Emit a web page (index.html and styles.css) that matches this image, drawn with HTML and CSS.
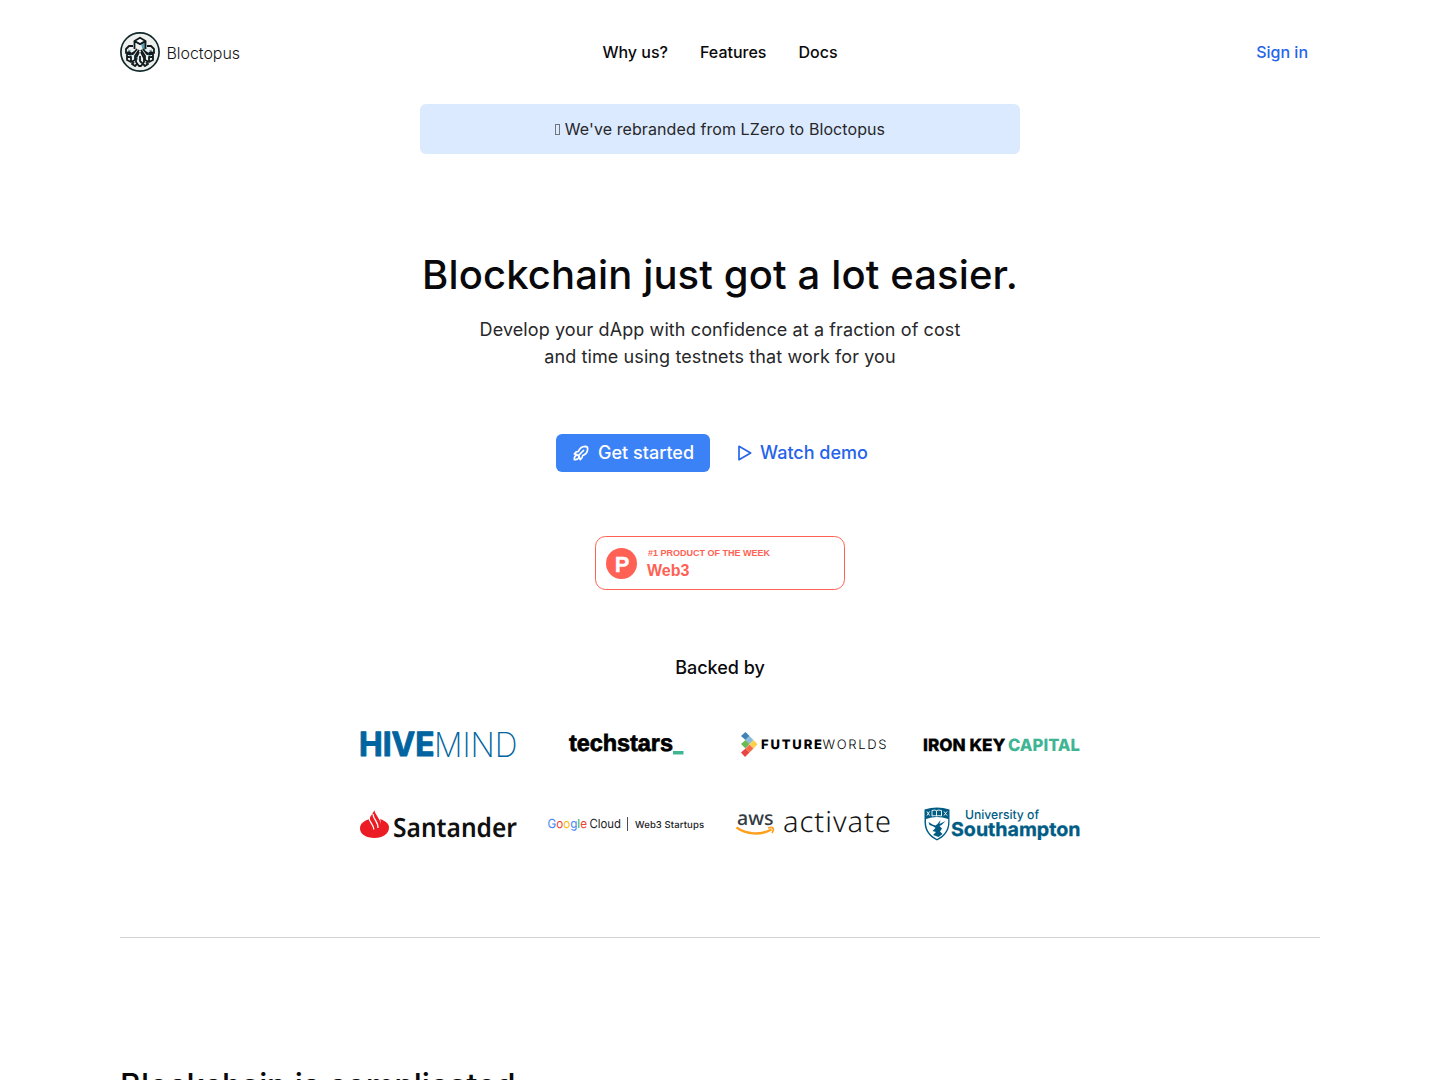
FILE: index.html
```html
<!DOCTYPE html>
<html lang="en">
<head>
<meta charset="utf-8">
<title>Bloctopus</title>
<link rel="stylesheet" href="styles.css">
</head>
<body>
<div class="page">
  <header class="header">
    <a class="brand">
      <svg width="120" height="40" viewBox="0 0 120 40">
        <circle cx="20" cy="20" r="19.1" fill="#eef0ee" stroke="#10282a" stroke-width="1.7"/>
        <path d="M21 12l5-3v8l-3 2z" fill="#5d9fb0"/>
        <g fill="none" stroke="#101a1c" stroke-width="1.8" stroke-linejoin="round">
          <path d="M14.500 9v8M25.500 9v8M14.500 9l5.500 3 5.500-3"/>
          <path d="M14.500 9L20 5.700 25.500 9 20 12z" fill="#fff"/>
          <path d="M13 14H9l-3 3v4l3-1 3 2 2-2M27 14h4l3 3v4l-3-1-3 2-2-2"/>
          <path d="M17 17l-4 5H7v6l4 2 4-2v-4l4-6M23 17l4 5h6v6l-4 2-4-2v-4l-4-6M7 25h4v4M33 25h-4v4"/>
          <path d="M19 20l-3 6v4l3 4h2l3-4v-4l-3-6M20 24v5l2 2M14 30l-2 2 3 2 2-2M26 30l2 2-3 2-2-2"/>
        </g>
        <path d="M8 18l3 1M29 19l3-1M9 24l3-1M28 23l3 1M17 25l1 3" stroke="#5d9fb0"/>
        <text class="inter" x="46.500" y="26.500" font-size="16" font-weight="300" fill="#151515" textLength="73.500">Bloctopus</text>
      </svg>
    </a>
    <nav class="nav"><a>Why us?</a><a>Features</a><a>Docs</a></nav>
    <a class="signin">Sign in</a>
  </header>
  <div class="notice"><span class="glyph-box"></span>We've rebranded from LZero to Bloctopus</div>
  <main class="hero">
    <h1>Blockchain just got a lot easier.</h1>
    <p class="lead">Develop your dApp with confidence at a fraction of cost<br>and time using testnets that work for you</p>
    <div class="actions">
      <a class="button primary">
        <svg width="20" height="20" viewBox="0 0 24 24" fill="none" stroke="currentColor" stroke-width="2" stroke-linecap="round" stroke-linejoin="round"><path d="M4 13a8 8 0 0 1 7 7a6 6 0 0 0 3-5a9 9 0 0 0 6-8a3 3 0 0 0-3-3a9 9 0 0 0-8 6a6 6 0 0 0-5 3"/><path d="M7 14a6 6 0 0 0-3 6a6 6 0 0 0 6-3"/><path d="M9.500 14.500l5.500-5.500"/></svg>
        Get started
      </a>
      <a class="button ghost">
        <svg width="20" height="20" viewBox="0 0 24 24" fill="none" stroke="currentColor" stroke-width="2" stroke-linecap="round" stroke-linejoin="round"><path d="M6 4v16l14-8z"/></svg>
        Watch demo
      </a>
    </div>
    <svg class="award" width="250" height="54" viewBox="0 0 250 54">
      <rect x=".5" y=".5" width="249" height="53" rx="10" fill="#fff" stroke="#ff6154"/>
      <circle cx="26.500" cy="27.500" r="15.500" fill="#ff6154"/>
      <text class="arial" x="19.800" y="35.500" font-size="22" font-weight="700" fill="#fff" stroke="#fff" stroke-width=".3">P</text>
      <text class="arial" x="53" y="20" font-size="9" font-weight="700" fill="#ff6154">#1 PRODUCT OF THE WEEK</text>
      <text class="arial" x="52" y="40" font-size="16" font-weight="700" fill="#ff6154">Web3</text>
    </svg>
    <h2 class="backed">Backed by</h2>
    <div class="logos">
      <svg viewBox="0 0 156 48">
        <g fill="#0064a0">
          <text class="inter" x="-1" y="36" font-size="33.500" font-weight="700" stroke="#0064a0" stroke-width="1" stroke-linejoin="round" textLength="75.500" lengthAdjust="spacingAndGlyphs">HIVE</text>
          <text class="inter" x="74" y="36.500" font-size="34.500" font-weight="200" textLength="83.500" lengthAdjust="spacingAndGlyphs">MIND</text>
        </g>
      </svg>
      <svg viewBox="0 0 156 48">
        <text class="arial" x="21" y="31" font-size="23.500" font-weight="700" stroke="#000" stroke-width=".7" textLength="104">techstars</text>
        <path d="M125 31h10.500v3.500H125z" fill="#40b593"/>
      </svg>
      <svg viewBox="0 0 156 48">
        <path d="M9.500 12l4 4-4 4-4.500-4z" fill="#3f82b5"/><path d="M13.500 16l4 4-4 4-4-4z" fill="#8dbbdb"/>
        <path d="M9.500 20l4 4-4 4.500-4.500-4.500z" fill="#6cba57"/><path d="M17.500 20l4 4.300-4 4.200-4-4.500z" fill="#fbd04b"/>
        <path d="M13.500 24.500l4 4-4 4-4-4z" fill="#f56a47"/><path d="M9.500 28.500l4 4-4.500 4.500-4-4.500z" fill="#e84643"/>
        <text class="inter" x="25" y="29" font-size="13" font-weight="800" textLength="61">FUTURE</text>
        <text class="inter" x="86.500" y="29" font-size="13" font-weight="300" textLength="64">WORLDS</text>
      </svg>
      <svg viewBox="0 0 156 48">
        <g class="inter" font-size="17" font-weight="800">
          <text x="-1" y="30.500" textLength="82.500" lengthAdjust="spacingAndGlyphs" stroke="#000" stroke-width=".3">IRON KEY</text>
          <text x="84" y="30.500" fill="#40b593" textLength="72" lengthAdjust="spacingAndGlyphs">CAPITAL</text>
        </g>
      </svg>
      <svg viewBox="0 0 156 48">
        <path d="M14.500 10.500c-1 4 .5 6 3 9.500 1.500 2 2 4 1.500 6 2-2 2-4.500 1-7 6 2 9 5 9 8.500 0 6-6 10.500-14.500 10.500S0 34 0 28.500c0-5 4-7.500 8.500-9z" fill="#ec1c24"/>
        <path d="M14.500 10.500q-2 3-.5 6.500l4 9q1 2 .5 4 4-5 1-10l-3-5q-2-3-2-4.500z" fill="#ec1c24"/>
        <path d="M9 17c-.5 5 5 7 4.800 12.500M13 14c0 5 5.500 8 5 14" fill="none" stroke="#fff" stroke-width="1.300"/>
        <text class="noto" x="33" y="36.800" font-size="26.500" font-weight="600" fill="#101010" textLength="124" lengthAdjust="spacingAndGlyphs">Santander</text>
      </svg>
      <svg viewBox="0 0 156 48">
        <text class="inter" x="-.5" y="28" font-size="12.500" textLength="39.500" lengthAdjust="spacingAndGlyphs"><tspan fill="#4285f4">G</tspan><tspan fill="#ea4335">o</tspan><tspan fill="#fbbc04">o</tspan><tspan fill="#4285f4">g</tspan><tspan fill="#34a853">l</tspan><tspan fill="#ea4335">e</tspan></text>
        <text class="inter" x="41.500" y="28" font-size="12.500" font-weight="400" fill="#202124" textLength="31.500" lengthAdjust="spacingAndGlyphs">Cloud</text>
        <path d="M79.500 17v14" stroke="#202124" stroke-width=".8"/>
        <text class="inter" x="87" y="27.500" font-size="9.500" font-weight="500" fill="#202124" textLength="69">Web3 Startups</text>
      </svg>
      <svg viewBox="0 0 156 48">
        <text class="noto" x="1" y="24.500" font-size="19.500" font-weight="500" fill="#333b43" textLength="36.500" lengthAdjust="spacingAndGlyphs">aws</text>
        <path d="M.5 27.500c10 7 24 8 35 2" fill="none" stroke="#ff9f1c" stroke-width="2.500"/><path d="M32 28c5-1.500 7 0 4 5" fill="none" stroke="#ff9f1c" stroke-width="1.700"/>
        <text class="noto" x="47" y="32" font-size="29" font-weight="300" fill="#151515" textLength="108">activate</text>
      </svg>
      <svg viewBox="0 0 156 48">
        <path d="M.5 9.500Q13 5.500 25.500 9.500V22c0 9-5 15-12.500 18.500C5.500 37 .5 31 .5 22z" fill="#005c84"/>
        <path d="M2 19Q13 15 24.200 19v3c0 8-4.500 13.500-11.200 17C6.300 35.500 2 30 2 22z" fill="#fff"/>
        <path d="M8 10.500q3-.8 4.500 0 2-.8 5 0v5.500q-3-.8-5 0-2-.8-4.500 0zM12.500 11v5M3 11.500l2.500 4M5.500 11.500l-2.500 4M20 11.500l3 4M23 11.500l-3 4" fill="none" stroke="#fff" stroke-width=".9"/>
        <path d="M4.500 22l4 2.500 3 1 2-1.500 3-4-1 4 6-3-4 4-2 1 2.500 2.500-2 3 2.500 2.500-4 3-5.500-2 3-3-3.500-1 3-3-2-1.500-4-1.500z" fill="#005c84"/>
        <g fill="#005c84">
          <text class="inter" x="41" y="19" font-size="12.500" font-weight="500" textLength="74" lengthAdjust="spacingAndGlyphs">University of</text>
          <text class="inter" x="27" y="36.300" font-size="19" font-weight="700" textLength="129.500" lengthAdjust="spacingAndGlyphs" stroke="#005c84" stroke-width=".3">Southampton</text>
        </g>
      </svg>
    </div>
  </main>
  <section class="problem"><h2>Blockchain is complicated</h2></section>
</div>
</body>
</html>
```
FILE: styles.css
```css
* { box-sizing: border-box; }
body { margin: 0; height: 1080px; overflow: hidden; background: #fff; color: #09090b; font-family: Inter, "Liberation Sans", sans-serif; font-size: 16px; line-height: 24px; }
h1, h2, p { margin: 0; font-weight: 500; }
svg { display: block; flex: none; }
.inter { font-family: Inter, sans-serif; }
.arial { font-family: "Liberation Sans", sans-serif; }
.noto { font-family: "Noto Sans", sans-serif; }
.page { width: 1200px; margin: 0 auto; }
.header { height: 104px; display: grid; grid-template-columns: 1fr auto 1fr; align-items: center; font-weight: 500; }
.nav { display: flex; gap: 32px; }
.signin { justify-self: end; padding-right: 12px; color: #2563eb; }
.notice { width: 600px; height: 50px; margin: 0 auto; border-radius: 6px; background: #dbeafe; color: #27272a; line-height: 50px; letter-spacing: .09px; text-align: center; }
.glyph-box { display: inline-block; width: 5px; height: 11px; margin-right: 5px; border: 1px solid #71757c; vertical-align: 0; }
.hero { display: flex; flex-direction: column; align-items: center; height: 784px; padding-top: 89px; border-bottom: 1px solid #d4d4d8; }
h1 { font-size: 40px; line-height: 63px; letter-spacing: .13px; white-space: nowrap; }
.lead { margin-top: 10px; color: #27272a; font-size: 18px; font-weight: 400; line-height: 27px; letter-spacing: .1px; text-align: center; }
.actions { display: flex; gap: 10px; margin-top: 64px; }
.button { height: 38px; padding: 0 16px; display: flex; align-items: center; gap: 8px; border-radius: 6px; font-size: 18px; font-weight: 500; }
.button svg { margin: 0 -1px; }
.primary { background: #3b82f6; color: #fff; }
.ghost { color: #2563eb; gap: 6px; }
.ghost svg { margin: 0 0 0 -2px; }
.award { margin-top: 64px; }
.backed { margin-top: 64px; font-size: 18px; line-height: 27px; }
.logos { width: 720px; margin-top: 39px; display: grid; grid-template-columns: repeat(4, 156px); gap: 32px; text-rendering: geometricPrecision; }
.logos svg { width: 156px; height: 48px; overflow: visible; }
.problem { padding-top: 120px; }
.problem h2 { font-size: 32px; line-height: 55px; letter-spacing: -.1px; }
```
